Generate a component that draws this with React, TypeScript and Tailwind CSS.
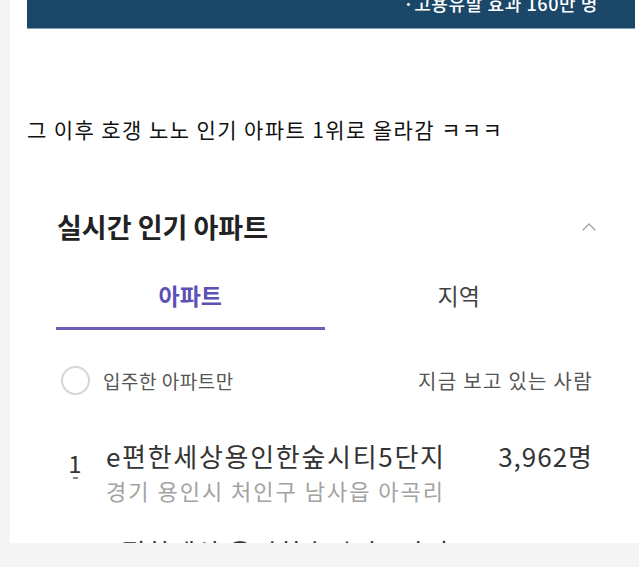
import { ChevronUp } from "lucide-react"

const font = { fontFamily: '"Noto Sans CJK KR", "Noto Sans", sans-serif' }

const App = () => {
  return (
    <div className="flex h-[567px] w-full overflow-hidden bg-[#f4f4f4]" style={font}>
      <div className="w-[10px] shrink-0" />
      <div className="flex h-[543px] flex-1 flex-col overflow-hidden bg-white">
        {/* banner */}
        <div className="ml-[17px] mr-[4px] flex h-[29px] shrink-0 justify-end overflow-hidden border-b border-[#7fa0b8] bg-[#1b4769] pr-[37px]">
          <span className="-mt-[7px] text-[18px] font-medium leading-[20px] tracking-[0.6px] text-white">·고용유발 효과 160만 명</span>
        </div>

        <p className="ml-[17px] mt-[86px] text-[21px] leading-[28px] tracking-[1.4px] text-[#111]">
          그 이후 호갱 노노 인기 아파트 1위로 올라감 ㅋㅋㅋ
        </p>

        <div className="px-[46px] pt-[66px]">
          <div className="flex items-center justify-between pl-[1px]">
            <h2 className="text-[27px] font-bold leading-[36px] text-[#222]">실시간 인기 아파트</h2>
            <ChevronUp className="-mr-[8px] h-[24px] w-[24px] text-[#a0a0a0]" strokeWidth={1.3} />
          </div>

          <div className="mt-[35px] flex">
            <div className="flex w-[270px] flex-col items-center">
              <span className="text-[23px] font-bold leading-[30px] text-[#5d50b4]">아파트</span>
              <div className="mt-[17px] h-[3px] w-full bg-[#6a5fb8]" />
            </div>
            <div className="flex w-[270px] flex-col items-center">
              <span className="text-[23px] leading-[30px] text-[#444]">지역</span>
            </div>
          </div>

          <div className="mt-[36px] flex items-center justify-between">
            <div className="flex items-center gap-[13px]">
              <span className="ml-[5px] h-[29px] w-[29px] rounded-full border-2 border-[#d6d6d6]" />
              <span className="text-[19px] leading-[26px] tracking-[0.5px] text-[#555]">입주한 아파트만</span>
            </div>
            <span className="text-[20px] leading-[26px] tracking-[1.3px] text-[#555]">지금 보고 있는 사람</span>
          </div>

          <div className="mt-[44px] flex items-start">
            <div className="mr-[12px] flex w-[38px] flex-col items-center pt-[9px]">
              <span className="text-[24px] leading-[30px] text-[#333]">1</span>
              <span className="mt-[-1px] h-[2px] w-[5px] bg-[#888]" />
            </div>
            <div className="flex flex-1 flex-col">
              <div className="flex items-center justify-between">
                <span className="text-[26px] leading-[34px] tracking-[1.7px] text-[#333]">e편한세상용인한숲시티5단지</span>
                <span className="text-[26px] leading-[34px] tracking-[1px] text-[#333]">3,962명</span>
              </div>
              <span className="mt-[3px] text-[22px] leading-[28px] tracking-[2px] text-[#a3a3a3]">경기 용인시 처인구 남사읍 아곡리</span>
            </div>
          </div>

          <div className="mt-[31px] flex items-start">
            <div className="mr-[12px] w-[38px]" />
            <span className="text-[26px] leading-[34px] tracking-[1px] text-[#333]">e편한세상 용인한숲시티 6단지</span>
          </div>
        </div>
      </div>
    </div>
  )
}

export default App
